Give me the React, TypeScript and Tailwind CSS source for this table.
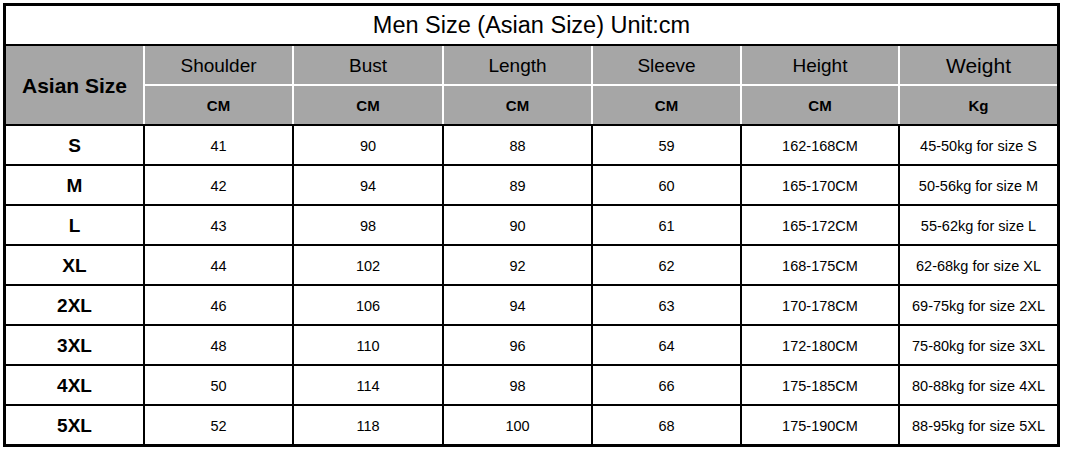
import React from "react"

const cols = "grid grid-cols-[137px_147px_148px_147px_147px_156px_157px] gap-[2px]"

const rows = [
  ["S", "41", "90", "88", "59", "162-168CM", "45-50kg for size S"],
  ["M", "42", "94", "89", "60", "165-170CM", "50-56kg for size M"],
  ["L", "43", "98", "90", "61", "165-172CM", "55-62kg for size L"],
  ["XL", "44", "102", "92", "62", "168-175CM", "62-68kg for size XL"],
  ["2XL", "46", "106", "94", "63", "170-178CM", "69-75kg for size 2XL"],
  ["3XL", "48", "110", "96", "64", "172-180CM", "75-80kg for size 3XL"],
  ["4XL", "50", "114", "98", "66", "175-185CM", "80-88kg for size 4XL"],
  ["5XL", "52", "118", "100", "68", "175-190CM", "88-95kg for size 5XL"],
]

const heads = ["Shoulder", "Bust", "Length", "Sleeve", "Height"]
const units = ["CM", "CM", "CM", "CM", "CM", "Kg"]

export default function App() {
  return (
    <div className="w-[1065px] h-[449px] bg-white pl-[3px] pt-[3px] font-['Liberation_Sans',Arial,sans-serif] text-black">
      <div className="w-[1057px] border-[3px] border-black bg-black flex flex-col gap-[2px]">
        <div className="h-[38px] bg-white flex items-center justify-center text-[23.5px] pt-[2px]">
          Men Size (Asian Size) Unit:cm
        </div>

        {/* grey header, white rules */}
        <div className={`${cols} bg-white grid-rows-[38px_38px]`}>
          <div className="row-span-2 bg-[#a6a6a6] flex items-center justify-center font-bold text-[21px] pt-[2px]">
            Asian Size
          </div>
          {heads.map(h => (
            <div key={h} className="bg-[#a6a6a6] flex items-center justify-center text-[19px] pt-[3px]">
              {h}
            </div>
          ))}
          <div className="bg-[#a6a6a6] flex items-center justify-center text-[21px] pt-[2px]">Weight</div>
          {units.map((u, i) => (
            <div key={i} className="bg-[#a6a6a6] flex items-center justify-center font-bold text-[15px] pt-[2px]">
              {u}
            </div>
          ))}
        </div>

        <div className={`${cols} auto-rows-[38px]`}>
          {rows.map(r =>
            r.map((c, i) => (
              <div
                key={r[0] + i}
                className={
                  i === 0
                    ? "bg-white flex items-center justify-center font-bold text-[19px] pt-[3px]"
                    : "bg-white flex items-center justify-center text-[14.5px] pt-[3px]"
                }
              >
                {c}
              </div>
            ))
          )}
        </div>
      </div>
    </div>
  )
}
